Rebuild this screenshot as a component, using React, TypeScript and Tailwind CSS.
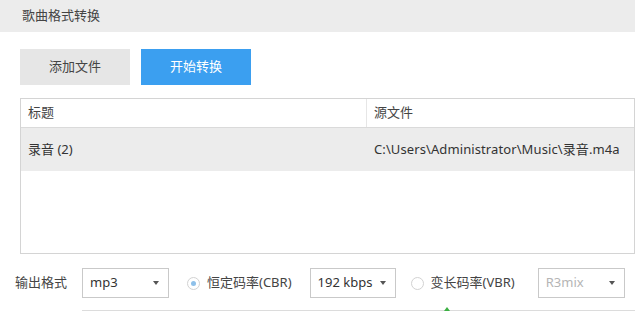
import React from "react";

const font = '"Noto Sans", "Noto Sans CJK SC", sans-serif';

function Select({ value, w, disabled }: { value: string; w: string; disabled?: boolean }) {
  return (
    <div
      className={`${w} h-[30px] border border-[#c9c9c9] bg-white flex items-center justify-between pl-[7px] pr-[9px] text-[13px] ${
        disabled ? "text-[#b5b5b5]" : "text-[#333]"
      }`}
    >
      <span>{value}</span>
      <span className="w-0 h-0 border-l-[3.5px] border-r-[3.5px] border-t-[4px] border-l-transparent border-r-transparent border-t-[#555]" />
    </div>
  );
}

function Radio({ checked }: { checked?: boolean }) {
  return (
    <span className="w-[13px] h-[13px] rounded-full border border-[#d2d2d2] bg-white flex items-center justify-center">
      {checked && <span className="w-[5px] h-[5px] rounded-full bg-[#8fc1ea]" />}
    </span>
  );
}

export default function App() {
  return (
    <div className="w-[640px] h-[315px] bg-white overflow-hidden text-[#333]" style={{ fontFamily: font }}>
      <div className="w-[635px] h-[32px] bg-[#ececec] flex items-center pl-[22px] text-[13px] text-[#444]">
        歌曲格式转换
      </div>
      <div className="flex gap-[11px] pl-[20px] pt-[17px]">
        <div className="w-[110px] h-[36px] bg-[#e6e6e6] flex items-center justify-center text-[13px] text-[#444]">
          添加文件
        </div>
        <div className="w-[110px] h-[36px] bg-[#3b9ff0] flex items-center justify-center text-[13px] text-white">
          开始转换
        </div>
      </div>
      <div className="ml-[20px] mt-[13px] w-[615px] h-[156px] border border-[#d4d4d4] bg-white">
        <div className="h-[29px] border-b border-[#dadada] flex text-[13px] text-[#444]">
          <div className="w-[346px] border-r border-[#e6e6e6] pl-[7px] flex items-center">标题</div>
          <div className="flex-1 pl-[7px] flex items-center">源文件</div>
        </div>
        <div className="h-[43px] bg-[#ececec] flex text-[13px] text-[#333]">
          <div className="w-[347px] pl-[7px] flex items-center">录音 (2)</div>
          <div className="flex-1 pl-[6px] flex items-center tracking-[0.1px]">C:\Users\Administrator\Music\录音.m4a</div>
        </div>
      </div>
      <div className="flex items-center mt-[14px] pl-[15px] text-[13px] text-[#444]">
        <span className="w-[67px]">输出格式</span>
        <Select value="mp3" w="w-[87px]" />
        <div className="ml-[18px] flex items-center gap-[7px]">
          <Radio checked />
          <span>恒定码率(CBR)</span>
        </div>
        <div className="ml-[18px]">
          <Select value="192 kbps" w="w-[86px]" />
        </div>
        <div className="ml-[15px] flex items-center gap-[7px]">
          <Radio />
          <span>变长码率(VBR)</span>
        </div>
        <div className="ml-[23px]">
          <Select value="R3mix" w="w-[87px]" disabled />
        </div>
      </div>
      <div className="relative ml-[82px] mt-[12px] w-[553px] h-px bg-[#dcdcdc]">
        <span className="absolute left-[362px] top-[-3px] w-0 h-0 border-l-[3px] border-r-[3px] border-b-[4px] border-l-transparent border-r-transparent border-b-[#3cb043]" />
      </div>
    </div>
  );
}
